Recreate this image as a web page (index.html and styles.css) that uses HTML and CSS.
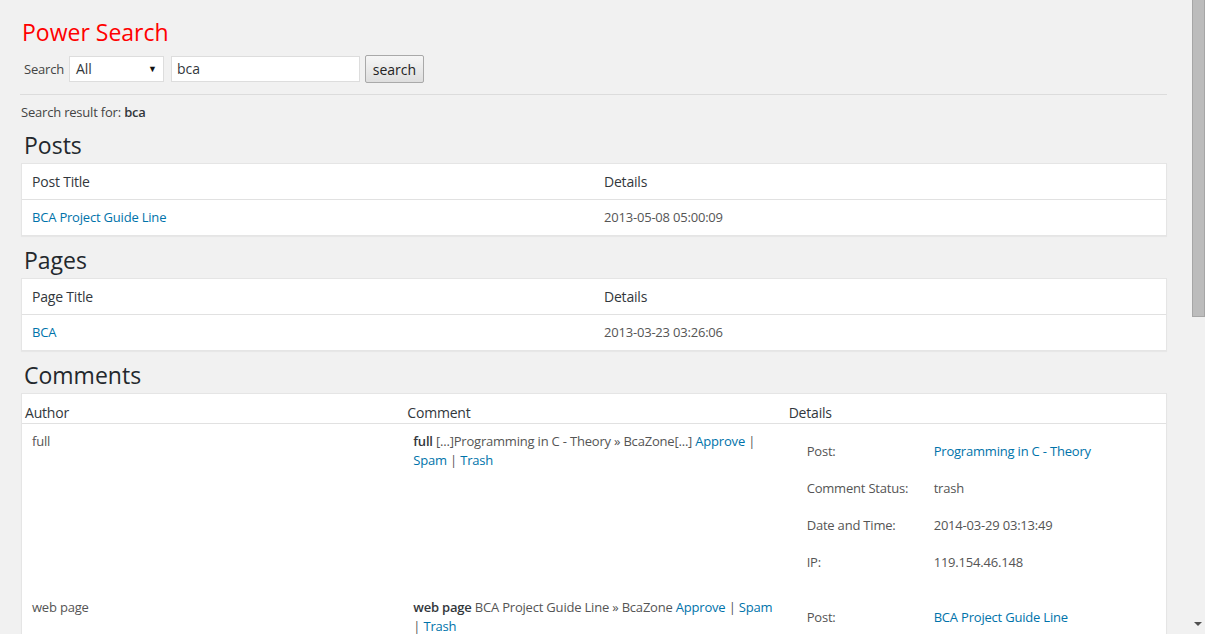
FILE: index.html
```html
<!DOCTYPE html>
<html>
<head>
<meta charset="utf-8">
<link rel="stylesheet" href="styles.css">
</head>
<body>
<div class="frame">
  <main class="wrap">
    <h1 class="title">Power Search</h1>
    <form class="search-form">
      <label class="search-label">Search</label>
      <div class="select"><span>All</span><span class="caret">▼</span></div>
      <div class="input">bca</div>
      <button type="button" class="btn">search</button>
    </form>
    <hr class="sep">
    <p class="result">Search result for: <b>bca</b></p>

    <h2 class="section">Posts</h2>
    <table class="widefat">
      <thead><tr><th class="half">Post Title</th><th>Details</th></tr></thead>
      <tbody><tr><td><a href="#">BCA Project Guide Line</a></td><td class="muted">2013-05-08 05:00:09</td></tr></tbody>
    </table>

    <h2 class="section">Pages</h2>
    <table class="widefat">
      <thead><tr><th class="half">Page Title</th><th>Details</th></tr></thead>
      <tbody><tr><td><a href="#">BCA</a></td><td class="muted">2013-03-23 03:26:06</td></tr></tbody>
    </table>

    <h2 class="section">Comments</h2>
    <table class="widefat comments">
      <thead><tr><th class="third first">Author</th><th class="third">Comment</th><th>Details</th></tr></thead>
      <tbody>
        <tr>
          <td class="muted">full</td>
          <td class="comment"><b>full</b> [...]Programming in C - Theory » BcaZone[...] <a href="#">Approve</a> <span class="pipe">|</span> <a href="#">Spam</a> <span class="pipe">|</span> <a href="#">Trash</a></td>
          <td class="details">
            <table class="info">
              <tr><td class="lbl">Post:</td><td><a href="#">Programming in C - Theory</a></td></tr>
              <tr><td class="lbl">Comment Status:</td><td>trash</td></tr>
              <tr><td class="lbl">Date and Time:</td><td>2014-03-29 03:13:49</td></tr>
              <tr><td class="lbl">IP:</td><td>119.154.46.148</td></tr>
            </table>
          </td>
        </tr>
        <tr>
          <td class="muted">web page</td>
          <td class="comment"><b>web page</b> BCA Project Guide Line » BcaZone <a href="#">Approve</a> <span class="pipe">|</span> <a href="#">Spam</a> <span class="pipe">|</span> <a href="#">Trash</a></td>
          <td class="details">
            <table class="info">
              <tr><td class="lbl">Post:</td><td><a href="#">BCA Project Guide Line</a></td></tr>
              <tr><td class="lbl">Comment Status:</td><td>approved</td></tr>
            </table>
          </td>
        </tr>
      </tbody>
    </table>
  </main>
  <div class="scrollbar">
    <div class="thumb"></div>
    <div class="track"></div>
    <div class="arrow"></div>
  </div>
</div>
</body>
</html>
```
FILE: styles.css
```css
html, body {
  margin: 0;
  padding: 0;
  height: 100%;
  overflow: hidden;
}
body {
  background: #f1f1f1;
  font-family: "Open Sans", "Liberation Sans", sans-serif;
  font-size: 13px;
  line-height: 1.4;
  color: #444;
}
.frame {
  display: flex;
  height: 634px;
}
.wrap {
  flex: 1;
  padding: 0 21px 0 21px;
  overflow: hidden;
}
.title {
  margin: 18px 0 0 1px;
  font-size: 23px;
  font-weight: 400;
  line-height: 29px;
  color: #ff0000;
}
.search-form {
  display: flex;
  align-items: center;
  margin: 8px 0 0 3px;
  height: 28px;
}
.search-label {
  font-size: 13px;
  color: #444;
  margin-right: 5px;
  letter-spacing: -0.2px;
}
.select {
  box-sizing: border-box;
  width: 95px;
  height: 26px;
  border: 1px solid #ddd;
  background: #fff;
  display: flex;
  align-items: center;
  justify-content: space-between;
  padding: 0 6px 0 6px;
  font-size: 14px;
  color: #32373c;
}
.caret {
  font-size: 9px;
  color: #111;
}
.input {
  box-sizing: border-box;
  width: 189px;
  height: 26px;
  margin-left: 7px;
  border: 1px solid #ddd;
  background: #fff;
  padding: 0 5px;
  font-size: 14px;
  line-height: 24px;
  color: #32373c;
}
.btn {
  box-sizing: border-box;
  margin-left: 5px;
  width: 59px;
  height: 28px;
  border: 1px solid #a9a9a9;
  border-radius: 2px;
  background: linear-gradient(#f6f6f6, #dedede);
  font-family: "Open Sans", "Liberation Sans", sans-serif;
  font-size: 14px;
  color: #222;
  padding: 0;
}
.sep {
  border: 0;
  border-top: 1px solid #dcdcdc;
  margin: 11px 0 0 -1px;
  height: 0;
}
.result {
  margin: 8px 0 10px 0;
  font-size: 13px;
  color: #444;
  letter-spacing: -0.2px;
}
.result b {
  font-weight: 600;
  color: #32373c;
}
.section {
  margin: 1px 0 3px 3px;
  font-size: 23px;
  font-weight: 400;
  line-height: 29px;
  color: #23282d;
}
.widefat {
  width: 100%;
  border-spacing: 0;
  border: 1px solid #e5e5e5;
  background: #fff;
  box-shadow: 0 1px 1px rgba(0, 0, 0, 0.04);
  margin-bottom: 10px;
}
.widefat th {
  text-align: left;
  font-weight: 400;
  font-size: 14px;
  color: #32373c;
  padding: 8px 10px;
  line-height: 19px;
  border-bottom: 1px solid #e1e1e1;
  letter-spacing: -0.2px;
}
.widefat td {
  padding: 8px 10px;
  line-height: 19px;
  vertical-align: top;
  font-size: 13px;
  color: #555;
  letter-spacing: -0.2px;
}
.half { width: 50%; box-sizing: border-box; }
.widefat a {
  color: #0073aa;
  text-decoration: none;
}
.muted { color: #555; }
.comments { table-layout: fixed; }
.widefat.comments th {
  padding: 9px 4px 1px;
}
.widefat.comments th.first {
  padding-left: 3px;
}
.third { width: 33.333%; box-sizing: border-box; }
.comment b {
  font-weight: 600;
  color: #32373c;
}
.pipe { color: #555; }
.info {
  border-spacing: 2px;
}
.widefat .info td {
  padding: 8px 10px;
  vertical-align: middle;
  color: #555;
  white-space: nowrap;
}
.widefat .info td.lbl {
  width: 115px;
  padding-right: 0;
  padding-left: 10px;
  box-sizing: content-box;
}
.scrollbar {
  width: 17px;
  flex: none;
  background: #f1f1f1;
  display: flex;
  flex-direction: column;
  align-items: center;
}
.thumb {
  box-sizing: border-box;
  width: 13px;
  height: 317px;
  margin-left: 3px;
  background: #bcbcbc;
  border: 1px solid #a6a6a6;
  border-top: 0;
}
.track { flex: 1; }
.arrow {
  width: 0;
  height: 0;
  border-left: 4px solid transparent;
  border-right: 4px solid transparent;
  border-top: 4px solid #505050;
  margin: 0 0 8px 2px;
}
```
